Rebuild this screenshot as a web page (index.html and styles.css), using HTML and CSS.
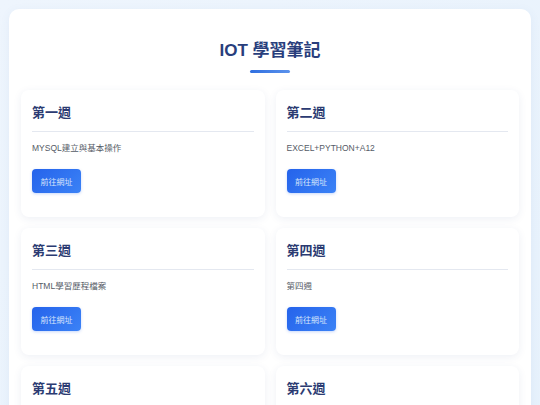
FILE: index.html
```html
<!DOCTYPE html>
<html lang="zh-Hant">
<head>
<meta charset="utf-8">
<title>IOT 學習筆記</title>
<link rel="stylesheet" href="styles.css">
</head>
<body>
<main class="container">
  <h1 class="title">IOT 學習筆記</h1>
  <div class="title-bar"></div>
  <section class="grid">
    <article class="card">
      <h2 class="card-title">第一週</h2>
      <p class="card-desc">MYSQL建立與基本操作</p>
      <a class="btn" href="#">前往網址</a>
    </article>
    <article class="card">
      <h2 class="card-title">第二週</h2>
      <p class="card-desc">EXCEL+PYTHON+A12</p>
      <a class="btn" href="#">前往網址</a>
    </article>
    <article class="card">
      <h2 class="card-title">第三週</h2>
      <p class="card-desc">HTML學習歷程檔案</p>
      <a class="btn" href="#">前往網址</a>
    </article>
    <article class="card">
      <h2 class="card-title">第四週</h2>
      <p class="card-desc">第四週</p>
      <a class="btn" href="#">前往網址</a>
    </article>
    <article class="card">
      <h2 class="card-title">第五週</h2>
      <p class="card-desc">第五週</p>
      <a class="btn" href="#">前往網址</a>
    </article>
    <article class="card">
      <h2 class="card-title">第六週</h2>
      <p class="card-desc">第六週</p>
      <a class="btn" href="#">前往網址</a>
    </article>
  </section>
</main>
</body>
</html>
```
FILE: styles.css
```css
html, body {
  margin: 0;
  padding: 0;
}
body {
  background: linear-gradient(135deg, #eef5fd 0%, #e6f1fc 100%);
  padding: 9px;
  font-family: "Liberation Sans", "Noto Sans CJK TC", sans-serif;
  min-height: 100vh;
  box-sizing: border-box;
}
.container {
  background: #ffffff;
  border-radius: 10px;
  padding: 28px 12px 20px;
  box-shadow: 0 2px 10px rgba(90, 130, 190, 0.08);
}
.title {
  margin: 0;
  text-align: center;
  font-size: 17px;
  line-height: 28px;
  font-weight: 700;
  color: #283e7c;
}
.title-bar {
  width: 40px;
  height: 3px;
  border-radius: 2px;
  margin: 5px auto 17px;
  background: linear-gradient(90deg, #2f6fe0, #5b92ec);
}
.grid {
  display: grid;
  grid-template-columns: 1fr 1fr;
  gap: 11px;
}
.card {
  background: #ffffff;
  border-radius: 8px;
  padding: 13px 11px 24px;
  box-shadow: 0 2px 8px rgba(40, 70, 130, 0.08);
  display: flex;
  flex-direction: column;
  align-items: flex-start;
}
.card-title {
  align-self: stretch;
  margin: 0;
  font-size: 13px;
  line-height: 20px;
  font-weight: 600;
  color: #2b3b72;
  padding-bottom: 8px;
  border-bottom: 1px solid #e4e8f0;
}
.card-desc {
  margin: 10px 0 15px;
  font-size: 8.5px;
  line-height: 12px;
  color: #555b66;
}
.btn {
  display: inline-flex;
  align-items: center;
  justify-content: center;
  width: 49px;
  height: 24px;
  border-radius: 4px;
  background: linear-gradient(135deg, #2563eb, #3b82f6);
  color: #d7e4fb;
  font-size: 8px;
  text-decoration: none;
  box-shadow: 0 1px 3px rgba(37, 99, 235, 0.25);
}
```
